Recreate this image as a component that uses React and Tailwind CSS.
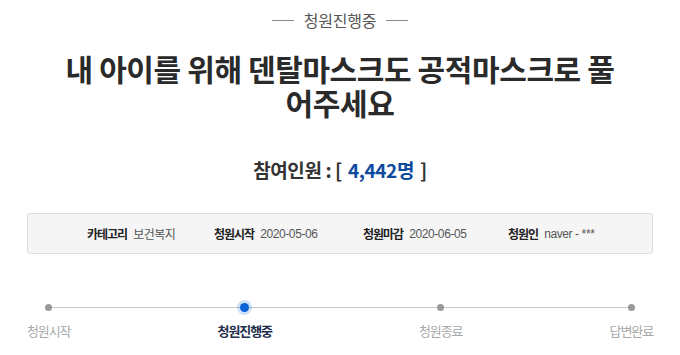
import React from 'react';

const steps = [
  { label: '청원시작', active: false },
  { label: '청원진행중', active: true },
  { label: '청원종료', active: false },
  { label: '답변완료', active: false },
];

const info = [
  { k: '카테고리', v: '보건복지', w: 'w-[127px]', num: false },
  { k: '청원시작', v: '2020-05-06', w: 'w-[149px]', num: true },
  { k: '청원마감', v: '2020-06-05', w: 'w-[145px]', num: true },
  { k: '청원인', v: 'naver - ***', w: '', num: true },
];

export default function App() {
  return (
    <div
      className="w-[680px] h-[355px] bg-white overflow-hidden"
      style={{ fontFamily: '"Noto Sans CJK KR", "Noto Sans", sans-serif' }}
    >
      <div className="px-[27px]">
        {/* 상태 */}
        <div className="flex items-center justify-center gap-[10px] h-[40px]">
          <span className="w-[22px] h-px bg-[#8a8a8a]" />
          <span className="text-[16px] text-[#555] leading-none tracking-[-0.2px]">청원진행중</span>
          <span className="w-[22px] h-px bg-[#8a8a8a]" />
        </div>

        {/* 제목 */}
        <h1 className="mx-auto max-w-[572px] mt-[11px] text-center text-[30px] font-bold text-[#2a2a2a] leading-[34px] tracking-[-0.4px]">
          내 아이를 위해 덴탈마스크도 공적마스크로 풀 어주세요
        </h1>

        {/* 참여인원 */}
        <div className="mt-[41px] flex justify-center text-[19px] font-bold leading-none tracking-[-0.4px] text-[#333]">
          <span>참여인원 : [</span>
          <span className="text-[#0c4a9e] ml-[6px]">4,442명</span>
          <span className="ml-[6px]">]</span>
        </div>

        {/* 정보 박스 */}
        <div className="mt-[34px] h-[41px] rounded-[3px] border border-[#dcdcdc] bg-[#f5f5f5] flex items-center pl-[59px] text-[12px] text-[#444]">
          {info.map((it) => (
            <div key={it.k} className={`flex items-center gap-[6px] ${it.w}`}>
              <span className="font-bold text-[#222] tracking-[-1px]">{it.k}</span>
              <span
                className={it.num ? 'text-[#555] tracking-[-0.4px]' : 'text-[#555] tracking-[-0.5px]'}
                style={it.num ? { fontFamily: '"Liberation Sans", "Noto Sans CJK KR", sans-serif' } : undefined}
              >
                {it.v}
              </span>
            </div>
          ))}
        </div>

        {/* 진행 단계 */}
        <div className="relative mt-[47px] flex justify-between">
          <div className="absolute left-[21px] right-[21px] top-[6px] h-px bg-[#c8c8c8]" />
          {steps.map((s) => (
            <div key={s.label} className="relative flex flex-col items-center">
              <div className="h-[13px] flex items-center justify-center">
                {s.active ? (
                  <span className="w-[9px] h-[9px] rounded-full bg-[#0a62d8] shadow-[0_0_0_3px_rgba(10,98,216,0.2)]" />
                ) : (
                  <span className="w-[7px] h-[7px] rounded-full bg-[#9a9a9a]" />
                )}
              </div>
              <span
                className={`mt-[10px] text-[13px] leading-none tracking-[-1.1px] ${
                  s.active ? 'font-bold text-[#1e2d4a]' : 'text-[#a8a8a8]'
                }`}
              >
                {s.label}
              </span>
            </div>
          ))}
        </div>
      </div>
    </div>
  );
}
